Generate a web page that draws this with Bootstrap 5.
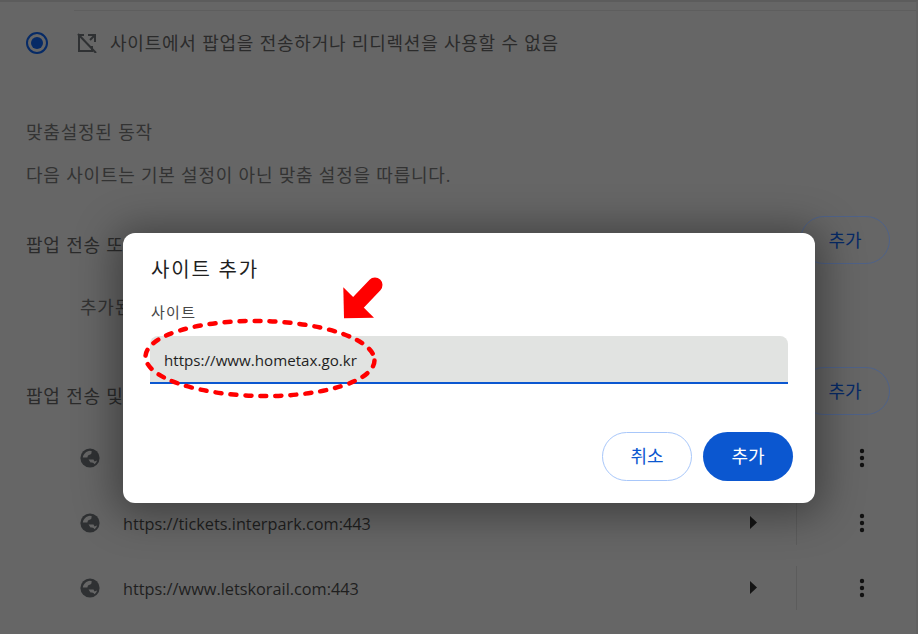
<!DOCTYPE html>
<html lang="ko">
<head>
<meta charset="utf-8">
<link href="https://cdn.jsdelivr.net/npm/bootstrap@5.3.0/dist/css/bootstrap.min.css" rel="stylesheet">
<style>
html,body{height:100%;overflow:hidden}
body{background:#666;color:#2b2b2b;font-family:"Open Sans","Noto Sans CJK KR",sans-serif;font-size:18px;letter-spacing:.78px;line-height:24px;position:relative}
.pg{height:634px;padding:0 26px 0 26px;border-top:2px solid #5c5c5c;border-right:2px solid #616161}
.hr-top{height:1px;background:#5e5e5e;margin:8px -26px 0 48px}
.radio-row{height:64px}
.radio-o{width:22px;height:22px;border:2px solid #062a66;border-radius:50%;margin-right:29px;padding:3px}
.radio-i{width:12px;height:12px;border-radius:50%;background:#062a66}
.blk-ic{flex:none;margin-right:13px}
.mute{color:#333}
.h-cust{margin-top:45px}
.p-cust{margin-top:19px}
.sect{height:48px}
.sect-t{padding-top:10px;white-space:nowrap}
.out-btn{flex:none;width:90px;height:48px;border:1px solid #4f6288;border-radius:24px;color:#062a66;background:transparent;font-size:18px;letter-spacing:0;padding:0}
.sect1{margin-top:29px}
.sect2{margin-top:48px}
.empty-row{margin:31px 0 0 54px;height:24px}
.site-row{height:65px;padding:0 25px 0 54px}
.rows{margin-top:10px}
.site-url{font-size:16.3px;letter-spacing:0;padding-top:3px;color:#1f1f1f}
.glb{width:20px;height:20px;margin-right:23px;flex:none}
.tri{margin-right:39px;width:7px;height:13px;fill:#141414}
.sep{width:1px;height:44px;background:#5c5c5c;margin-right:62px}
.dots{width:6px;height:20px;fill:#111}
.dlg{position:absolute;left:123px;top:233px;width:692px;height:270px;border:0;border-radius:12px;background:#fff;box-shadow:0 4px 40px 8px rgba(0,0,0,.38);padding:0 22px 0 27px;color:#1f1f1f}
.dlg-title{font-size:20px;letter-spacing:1.8px;line-height:28px;margin-top:23px;margin-left:1px}
.dlg-lab{font-size:15px;letter-spacing:1.3px;line-height:20px;color:#474747;margin:18px 0 0 1px}
.url-in{display:block;width:638px;height:48px;margin-top:14px;border:0;border-bottom:2px solid #0b57d0;border-radius:8px 8px 0 0;background:#e1e3e1;color:#1f1f1f;font-family:inherit;font-size:15.15px;letter-spacing:0;padding:2px 14px 0;outline:0}
.acts{gap:11px;margin-top:48px}
.b-c,.b-a{width:90px;height:49px;border-radius:25px;padding:0;font-size:18px;letter-spacing:0}
.b-c{border:1px solid #a8c7fa;background:#fff;color:#0b57d0}
.b-a{border:0;background:#0b57d0;color:#fff}
.mark-svg{position:absolute;left:0;top:0;pointer-events:none}
</style>
</head>
<body>
<svg width="0" height="0" class="position-absolute"><defs><g id="glob"><circle cx="10" cy="10" r="9.6" fill="#2f3133"/><path d="M2.8 9.5C3.3 6 6.3 3.2 10 2.8L11.8 3.2 11.2 6 8 7.4 7.4 9.5Z" fill="#666"/><path d="M8.5 11.6L13.5 11.5 14.5 13.5 17 12.4C16.6 14 15.6 15.4 14.5 16.2 13.6 14.6 12.5 14.6 10.5 14.6 9 14.1 8.5 13Z" fill="#666"/></g></defs></svg>
<div class="pg">
  <div class="hr-top"></div>
  <div class="radio-row d-flex align-items-center">
    <div class="radio-o"><div class="radio-i"></div></div>
    <svg class="blk-ic" width="20" height="20" viewBox="0 0 20 20" fill="none" stroke="#2f3133" stroke-width="2"><path d="M7 2H2v16h13v-5"/><path d="M11 2h7v7"/><path d="M18 2l-5 5"/><path d="M1 1l18 19"/></svg>
    <span>사이트에서 팝업을 전송하거나 리디렉션을 사용할 수 없음</span>
  </div>
  <div class="h-cust mute">맞춤설정된 동작</div>
  <div class="p-cust mute">다음 사이트는 기본 설정이 아닌 맞춤 설정을 따릅니다.</div>
  <div class="sect sect1 d-flex align-items-center justify-content-between"><span class="sect-t">팝업 전송 또는 리디렉션을 사용할 수 없음</span><button class="btn out-btn">추가</button></div>
  <div class="empty-row mute">추가된 사이트 없음</div>
  <div class="sect sect2 d-flex align-items-center justify-content-between"><span class="sect-t">팝업 전송 및 리디렉션 사용이 허용됨</span><button class="btn out-btn">추가</button></div>
  <div class="rows">
    <div class="site-row d-flex align-items-center"><svg class="glb" viewBox="0 0 20 20"><use href="#glob"/></svg><span class="site-url flex-grow-1">https://www.gov.kr:443</span><svg class="tri" viewBox="0 0 7 13"><path d="M0 0l7 6.5L0 13z"/></svg><div class="sep"></div><svg class="dots" viewBox="0 0 6 20"><circle cx="3" cy="3" r="2.2"/><circle cx="3" cy="10" r="2.2"/><circle cx="3" cy="17" r="2.2"/></svg></div>
    <div class="site-row d-flex align-items-center"><svg class="glb" viewBox="0 0 20 20"><use href="#glob"/></svg><span class="site-url flex-grow-1">https://tickets.interpark.com:443</span><svg class="tri" viewBox="0 0 7 13"><path d="M0 0l7 6.5L0 13z"/></svg><div class="sep"></div><svg class="dots" viewBox="0 0 6 20"><circle cx="3" cy="3" r="2.2"/><circle cx="3" cy="10" r="2.2"/><circle cx="3" cy="17" r="2.2"/></svg></div>
    <div class="site-row d-flex align-items-center"><svg class="glb" viewBox="0 0 20 20"><use href="#glob"/></svg><span class="site-url flex-grow-1">https://www.letskorail.com:443</span><svg class="tri" viewBox="0 0 7 13"><path d="M0 0l7 6.5L0 13z"/></svg><div class="sep"></div><svg class="dots" viewBox="0 0 6 20"><circle cx="3" cy="3" r="2.2"/><circle cx="3" cy="10" r="2.2"/><circle cx="3" cy="17" r="2.2"/></svg></div>
  </div>
</div>
<div class="card dlg">
  <div class="dlg-title">사이트 추가</div>
  <div class="dlg-lab">사이트</div>
  <input class="url-in" type="text" value="https://www.hometax.go.kr" aria-label="사이트">
  <div class="acts d-flex justify-content-end">
    <button class="btn b-c">취소</button>
    <button class="btn b-a">추가</button>
  </div>
</div>
<svg class="mark-svg" width="918" height="634" viewBox="0 0 918 634" fill="none">
  <ellipse cx="260" cy="358.5" rx="114.5" ry="37.5" stroke="#f00" stroke-width="4.5" stroke-linecap="round" stroke-dasharray="6 9" transform="rotate(1 260 358)"/>
  <path d="M375 285L354 307" stroke="#f00" stroke-width="15" stroke-linecap="round"/>
  <path d="M343.3 287.3L344 318.3L374 317.7Z" fill="#f00"/>
</svg>
</body>
</html>
